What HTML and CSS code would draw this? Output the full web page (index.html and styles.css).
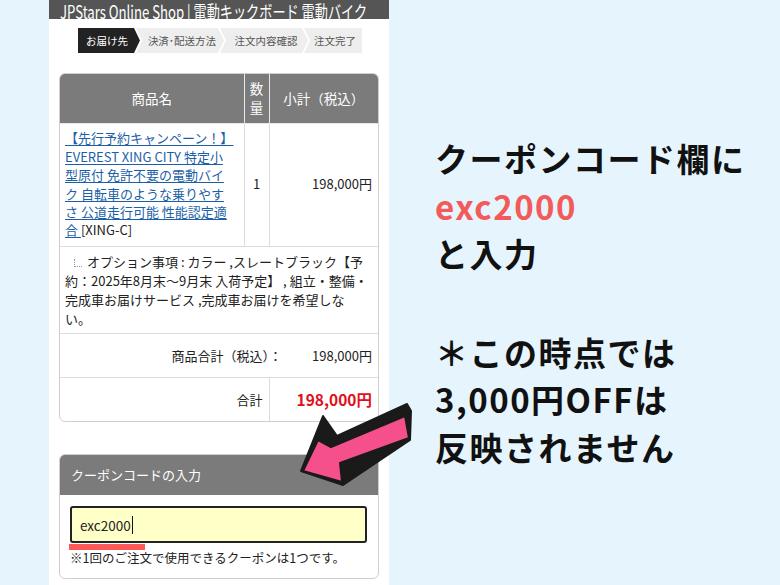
FILE: index.html
```html
<!DOCTYPE html>
<html lang="ja">
<head>
<meta charset="utf-8">
<title>クーポンコード入力</title>
<link rel="stylesheet" href="styles.css">
</head>
<body>
<div class="page">
  <div class="shop">
    <div class="topbar"><span class="topbar-text">JPStars Online Shop | 電動キックボード 電動バイク</span></div>
    <div class="steps">
      <div class="step step-first current">お届け先</div>
      <div class="step step-2">決済･配送方法</div>
      <div class="step step-3">注文内容確認</div>
      <div class="step step-last">注文完了</div>
    </div>

    <div class="cart">
      <table class="cart-table">
        <colgroup>
          <col class="c-name">
          <col class="c-qty">
          <col class="c-sub">
        </colgroup>
        <thead>
          <tr class="head-row">
            <th>商品名</th>
            <th class="qty-head">数量</th>
            <th>小計（税込）</th>
          </tr>
        </thead>
        <tbody>
          <tr class="item-row">
            <td class="name-cell"><a href="#" class="item-link">【先行予約キャンペーン！】<br>EVEREST XING CITY 特定小<br>型原付 免許不要の電動バイ<br>ク 自転車のような乗りやす<br>さ 公道走行可能 性能認定適<br>合 </a>[XING-C]</td>
            <td class="qty-cell">1</td>
            <td class="price-cell">198,000円</td>
          </tr>
          <tr class="option-row">
            <td colspan="3"><span class="opt-icon"></span>オプション事項 : カラー ,スレートブラック【予約：2025年8月末〜9月末 入荷予定】 , 組立・整備・完成車お届けサービス ,完成車お届けを希望しな<br>い。</td>
          </tr>
          <tr class="subtotal-row">
            <td colspan="3"><div class="subtotal"><span>商品合計（税込）：</span><span>198,000円</span></div></td>
          </tr>
          <tr class="total-row">
            <td colspan="2" class="total-label">合計</td>
            <td class="total-price">198,000円</td>
          </tr>
        </tbody>
      </table>
    </div>

    <div class="coupon">
      <div class="coupon-head">クーポンコードの入力</div>
      <div class="coupon-body">
        <div class="coupon-input"><span>exc2000</span><span class="caret"></span></div>
        <span class="marker"></span>
        <p class="coupon-note">※1回のご注文で使用できるクーポンは1つです。</p>
      </div>
    </div>
  </div>

  <div class="note">
    <p class="note-block">クーポンコード欄に<br><span class="accent">exc2000</span><br>と入力</p>
    <p class="note-block second">＊この時点では<br>3,000円OFFは<br>反映されません</p>
  </div>

  <svg class="arrow" viewBox="295 395 120 95" width="120" height="95" aria-hidden="true">
    <polygon points="301,471 323,416 337,436 407,404 411,411 410,440 343,485" fill="#1a1a1a" stroke="#1a1a1a" stroke-width="2" stroke-linejoin="round"/>
    <polygon points="303,471 318,440 331,447 405,416 409,438 340,463 342,482" fill="#f6508c" stroke="#1a1a1a" stroke-width="2" stroke-linejoin="round"/>
  </svg>
</div>
</body>
</html>
```

FILE: styles.css
```css
* { box-sizing: border-box; }

html, body {
  margin: 0;
  padding: 0;
}

body {
  background: #e6f4fd;
  font-family: "Noto Sans CJK JP", "Noto Sans", sans-serif;
  color: #222;
  width: 780px;
  height: 585px;
  overflow: hidden;
}

.page {
  position: relative;
  display: flex;
  align-items: flex-start;
  height: 585px;
}

/* ---------- shop screenshot ---------- */
.shop {
  width: 340px;
  height: 585px;
  margin-left: 49px;
  background: #fff;
  flex: none;
}

.topbar {
  height: 19px;
  background: #555;
  overflow: hidden;
  padding-left: 11px;
}

.topbar-text {
  display: inline-block;
  color: #fff;
  font-size: 18px;
  line-height: 24px;
  margin-top: -6px;
  white-space: nowrap;
  transform: scaleX(0.73);
  transform-origin: 0 0;
}

.steps {
  display: flex;
  margin: 9px 0 0 29px;
  height: 25px;
}

.step {
  height: 25px;
  line-height: 25px;
  font-size: 10.5px;
  color: #555;
  background: #eeeeee;
  text-align: center;
  padding-left: 4px;
  margin-left: -4px;
  clip-path: polygon(0 0, calc(100% - 6px) 0, 100% 50%, calc(100% - 6px) 100%, 0 100%, 6px 50%);
  white-space: nowrap;
}

.step-first {
  margin-left: 0;
  padding-left: 0;
  padding-right: 4px;
  width: 62px;
  clip-path: polygon(0 0, calc(100% - 6px) 0, 100% 50%, calc(100% - 6px) 100%, 0 100%);
}

.step-2 { width: 88px; }
.step-3 { width: 88px; }

.step-last {
  width: 58px;
  clip-path: polygon(0 0, 100% 0, 100% 100%, 0 100%, 6px 50%);
}

.step.current {
  background: #222;
  color: #fff;
}

/* ---------- cart table ---------- */
.cart {
  margin: 20px 0 0 10px;
  width: 320px;
  border: 1px solid #cfcfcf;
  border-radius: 6px;
  overflow: hidden;
}

.cart-table {
  width: 100%;
  border-collapse: collapse;
  border-style: hidden;
  table-layout: fixed;
  font-size: 13px;
}

.c-name { width: 184px; }
.c-qty { width: 25px; }
.c-sub { width: 109px; }

.cart-table th,
.cart-table td {
  border: 1px solid #dcdcdc;
}

.head-row th {
  background: #7b7b7b;
  color: #fff;
  font-weight: normal;
  font-size: 13.5px;
  height: 49px;
  line-height: 18px;
  padding: 0 4px;
  border-color: #e8e8e8;
}

.head-row th.qty-head {
  padding: 0 5px;
  line-height: 19px;
}

.item-row td {
  height: 123px;
  line-height: 18.4px;
  vertical-align: middle;
}

.name-cell {
  padding: 5px 2px 5px 5px;
  white-space: nowrap;
}

.item-link {
  color: #1d5fa6;
  text-decoration: underline;
  text-underline-offset: 2px;
}

.qty-cell {
  text-align: center;
}

.price-cell {
  text-align: right;
  padding-right: 6px;
}

.option-row td {
  height: 87px;
  padding: 5px 6px 5px 5px;
  line-height: 19px;
}

.opt-icon {
  display: inline-block;
  width: 8px;
  height: 8px;
  margin: 0 5px 0 9px;
  border-left: 1px dotted #999;
  border-bottom: 1px dotted #999;
}

.subtotal-row td {
  height: 44px;
  padding: 0 6px;
}

.subtotal {
  display: flex;
  justify-content: flex-end;
  gap: 30px;
}

.total-row td {
  height: 44px;
}

.total-label {
  text-align: right;
  padding-right: 6px;
}

.total-price {
  text-align: right;
  padding-right: 6px;
  color: #e0101a;
  font-size: 15.5px;
  font-weight: bold;
}

/* ---------- coupon ---------- */
.coupon {
  margin: 32px 0 0 10px;
  width: 320px;
  border: 1px solid #cfcfcf;
  border-radius: 6px;
  overflow: hidden;
}

.coupon-head {
  height: 40px;
  line-height: 40px;
  background: #7b7b7b;
  color: #fff;
  font-size: 13px;
  padding-left: 11px;
}

.coupon-body {
  position: relative;
  padding: 11px 10px 11px 10px;
}

.coupon-input {
  display: flex;
  align-items: center;
  height: 37px;
  width: 297px;
  border: 2px solid #222;
  border-radius: 3px;
  background: #ffffc8;
  padding-left: 8px;
  font-size: 13.5px;
}

.caret {
  display: inline-block;
  width: 1px;
  height: 18px;
  background: #111;
  margin-left: 1px;
}

.marker {
  position: absolute;
  left: 9px;
  top: 49px;
  width: 76px;
  height: 6px;
  background: #ff5a5a;
}

.coupon-note {
  margin: 6px 0 0 0;
  font-size: 12.5px;
  line-height: 18px;
}

/* ---------- annotation ---------- */
.note {
  margin-left: 46px;
  padding-top: 135px;
  font-weight: bold;
  font-size: 33px;
  line-height: 47.5px;
  letter-spacing: 1.5px;
  color: #111;
}

.note-block {
  margin: 0;
}

.note-block.second {
  margin-top: 51px;
}

.accent {
  color: #f35a5a;
}

.arrow {
  position: absolute;
  left: 295px;
  top: 395px;
  overflow: visible;
}
```
